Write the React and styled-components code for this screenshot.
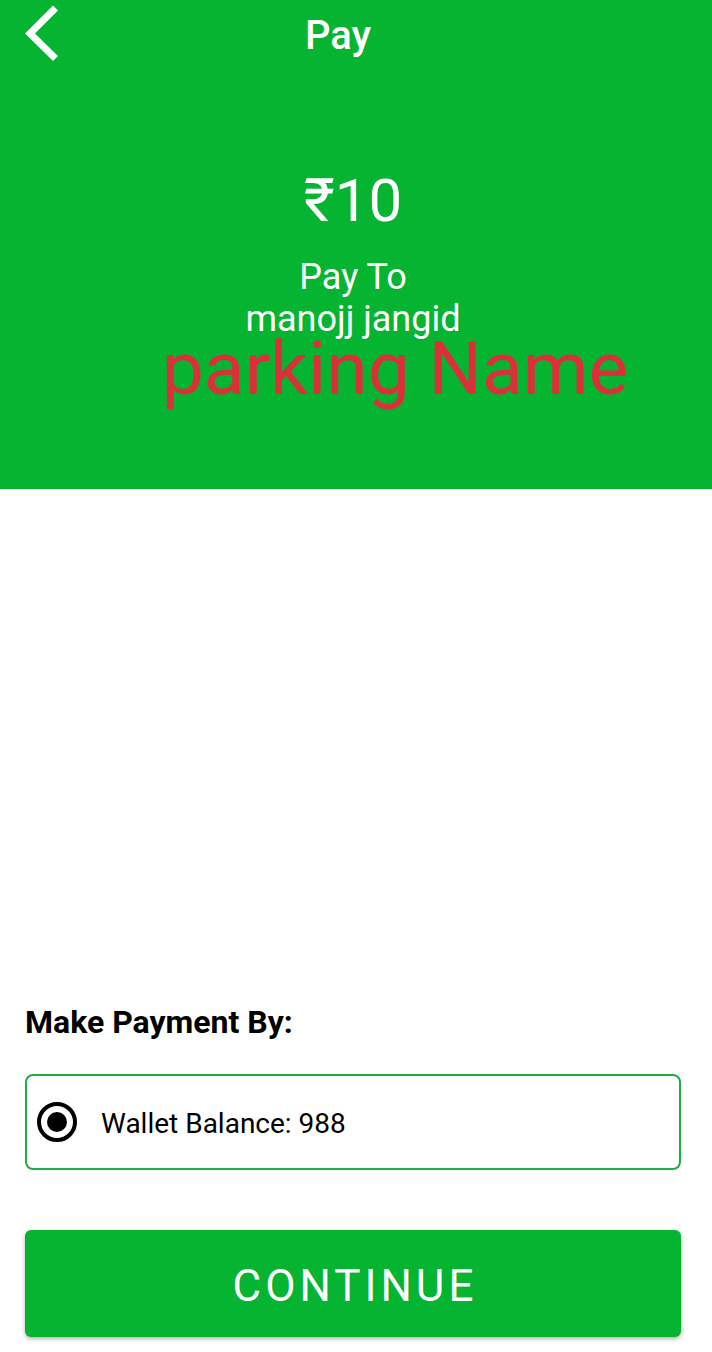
import React from "react";
import styled, { createGlobalStyle } from "styled-components";

const green = "#05b430";

const GlobalStyle = createGlobalStyle`
  * { box-sizing: border-box; }
  body {
    margin: 0;
    background: #fff;
    font-family: Roboto, "Liberation Sans", sans-serif;
  }
`;

const Screen = styled.div`
  display: flex;
  flex-direction: column;
  min-height: 100vh;
`;

const Hero = styled.header`
  background: ${green};
  color: #fff;
  padding-bottom: 93px;
`;

const TopBar = styled.div`
  display: grid;
  grid-template-columns: 60px 1fr 88px;
  align-items: center;
  height: 72px;
  padding: 0 20px 0 12px;
`;

const BackButton = styled.button`
  display: flex;
  width: 60px;
  height: 64px;
  padding: 0;
  border: 0;
  background: none;
  color: inherit;
  cursor: pointer;
`;

const Title = styled.h1`
  margin: 0;
  font-size: 40px;
  line-height: 48px;
  font-weight: 500;
  text-align: center;
`;

const Summary = styled.div`
  padding: 92px 32px 0 26px;
  text-align: center;
`;

const Amount = styled.p`
  margin: 0 0 18px;
  font-size: 60px;
  line-height: 74px;
`;

const Payee = styled.p`
  margin: 0;
  font-size: 36px;
  line-height: 42px;
`;

const ParkingName = styled.p`
  margin: 0;
  padding-left: 84px;
  color: #dc3039;
  font-size: 75px;
  line-height: 56px;
`;

const PaymentForm = styled.form`
  margin-top: auto;
  padding: 0 31px 15px 25px;
`;

const Methods = styled.fieldset`
  margin: 0 0 60px;
  padding: 0;
  border: 0;
`;

const Legend = styled.legend`
  padding: 0;
  margin-bottom: 32px;
  font-size: 32px;
  line-height: 40px;
  font-weight: 700;
`;

const Method = styled.label`
  display: flex;
  align-items: center;
  gap: 24px;
  height: 96px;
  padding: 0 10px;
  border: 2px solid #20ad43;
  border-radius: 8px;
  font-size: 28px;
  line-height: 36px;
`;

const MethodName = styled.span`
  padding-top: 4px;
`;

const Radio = styled.input`
  appearance: none;
  display: grid;
  place-items: center;
  width: 40px;
  height: 40px;
  margin: 0;
  border: 4px solid #000;
  border-radius: 50%;

  &:checked::before {
    content: "";
    width: 20px;
    height: 20px;
    border-radius: 50%;
    background: #000;
  }
`;

const Continue = styled.button`
  display: block;
  width: 100%;
  height: 107px;
  padding: 5px 0 0 4px;
  border: 0;
  border-radius: 6px;
  background: ${green};
  box-shadow: 0 2px 4px rgba(0, 0, 0, 0.3);
  color: #fff;
  font: 400 44px/52px Roboto, "Liberation Sans", sans-serif;
  letter-spacing: 4px;
  cursor: pointer;
`;

export default function App() {
  return (
    <Screen>
      <GlobalStyle />
      <Hero>
        <TopBar>
          <BackButton type="button" aria-label="Back">
            <svg width="60" height="64" viewBox="0 0 60 64" fill="none" aria-hidden="true">
              <path d="M43.500 4 18 29.500 43.500 54.500" stroke="currentColor" strokeWidth="7" />
            </svg>
          </BackButton>
          <Title>Pay</Title>
        </TopBar>
        <Summary>
          <Amount>₹10</Amount>
          <Payee>Pay To</Payee>
          <Payee>manojj jangid</Payee>
          <ParkingName>parking Name</ParkingName>
        </Summary>
      </Hero>
      <PaymentForm onSubmit={(e) => e.preventDefault()}>
        <Methods>
          <Legend>Make Payment By:</Legend>
          <Method>
            <Radio type="radio" name="method" value="wallet" defaultChecked />
            <MethodName>Wallet Balance: 988</MethodName>
          </Method>
        </Methods>
        <Continue type="submit">CONTINUE</Continue>
      </PaymentForm>
    </Screen>
  );
}
